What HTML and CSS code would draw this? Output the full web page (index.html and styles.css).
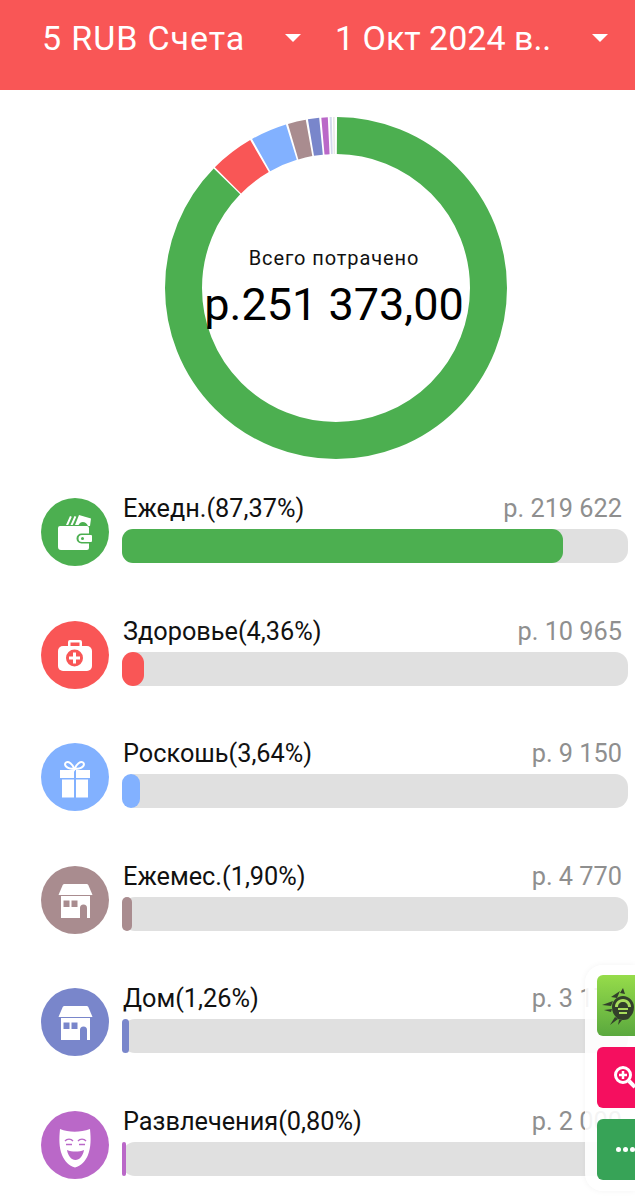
FILE: index.html
```html
<!DOCTYPE html>
<html lang="en">
<head>
  <meta charset="UTF-8" />
  <title>Расходы</title>
  <link rel="stylesheet" href="styles.css">
</head>
<body>
  <div class="header">
    <div class="select select-accounts"><span>5 RUB Счета</span><i class="caret"></i></div>
    <div class="select select-date"><span>1 Окт 2024 в..</span><i class="caret"></i></div>
  </div>

  <div class="chart">
    <svg class="donut" width="342" height="342" viewBox="0 0 342 342">
      <g fill="none" stroke-width="37" transform="rotate(-90 171 171)">
        <circle cx="171" cy="171" r="152.5" pathLength="100" stroke="#4caf50" stroke-dasharray="87.22 100" stroke-dashoffset="-0.1"/>
        <circle cx="171" cy="171" r="152.5" pathLength="100" stroke="#f95656" stroke-dasharray="4.16 100" stroke-dashoffset="-87.47"/>
        <circle cx="171" cy="171" r="152.5" pathLength="100" stroke="#82b1ff" stroke-dasharray="3.44 100" stroke-dashoffset="-91.83"/>
        <circle cx="171" cy="171" r="152.5" pathLength="100" stroke="#a98c8f" stroke-dasharray="1.7 100" stroke-dashoffset="-95.47"/>
        <circle cx="171" cy="171" r="152.5" pathLength="100" stroke="#7986cb" stroke-dasharray="1.06 100" stroke-dashoffset="-97.37"/>
        <circle cx="171" cy="171" r="152.5" pathLength="100" stroke="#ba68c8" stroke-dasharray="0.6 100" stroke-dashoffset="-98.63"/>
        <circle cx="171" cy="171" r="152.5" pathLength="100" stroke="#d5d9ee" stroke-dasharray="0.2 100" stroke-dashoffset="-99.4"/>
        <circle cx="171" cy="171" r="152.5" pathLength="100" stroke="#e6e6e6" stroke-dasharray="0.15 100" stroke-dashoffset="-99.72"/>
      </g>
    </svg>
    <div class="chart-center">
      <div class="chart-label">Всего потрачено</div>
      <div class="chart-total">р.251 373,00</div>
    </div>
  </div>

  <div class="list">
    <div class="row">
      <div class="icon" style="background:#4caf50">
        <svg width="68" height="68" viewBox="0 0 68 68" fill="#fff">
          <path d="M25 27l4-9 1.800.8-3.600 8.200zM29.500 27l4-9 1.800.8-3.600 8.200zM34 27l4-10 12 3.500-1 7.500h-2c-1.500-3.500-5-5-8-3l-1.500 2z"/>
          <path d="M19 28h27a2 2 0 0 1 2 2v5.500h-7.500a5 5 0 0 0 0 10H48V50a2 2 0 0 1-2 2H20a3 3 0 0 1-3-3V30a2 2 0 0 1 2-2z"/>
          <path fill-rule="evenodd" d="M41 37h9a1 1 0 0 1 1 1v5a1 1 0 0 1-1 1h-9a3.500 3.500 0 0 1 0-7zM41.500 39a1.500 1.500 0 1 0 0 3 1.500 1.500 0 0 0 0-3z"/>
        </svg>
      </div>
      <div class="info">
        <div class="info-top"><span class="name">Ежедн.(87,37%)</span><span class="amount">р. 219 622</span></div>
        <div class="track"><div class="fill" style="width:87.2%;background:#4caf50"></div></div>
      </div>
    </div>

    <div class="row">
      <div class="icon" style="background:#f95656">
        <svg width="68" height="68" viewBox="0 0 68 68" fill="#fff">
          <path d="M27 25v-4a2 2 0 0 1 2-2h10a2 2 0 0 1 2 2v4h-2.500v-3.500h-9V25z"/>
          <rect x="17" y="25" width="34" height="25" rx="5"/>
          <circle cx="33.500" cy="37" r="8.500" fill="#f95656"/>
          <path d="M32 31.500h3V35.500h4v3h-4v4h-3v-4h-4v-3h4z"/>
        </svg>
      </div>
      <div class="info">
        <div class="info-top"><span class="name">Здоровье(4,36%)</span><span class="amount">р. 10 965</span></div>
        <div class="track"><div class="fill" style="width:22px;background:#f95656"></div></div>
      </div>
    </div>

    <div class="row">
      <div class="icon" style="background:#82b1ff">
        <svg width="68" height="68" viewBox="0 0 68 68" fill="#fff">
          <path d="M33.500 26c-2-5-6-8-8.500-6.500-2.500 2 0 6.500 8.500 6.500 8.500 0 11-4.500 8.500-6.500-2.500-1.500-6.500 1.500-8.500 6.500z" fill="none" stroke="#fff" stroke-width="2"/>
          <rect x="19" y="27" width="14" height="8"/>
          <rect x="35" y="27" width="14" height="8"/>
          <rect x="21" y="36.500" width="12" height="18"/>
          <rect x="35" y="36.500" width="12" height="18"/>
        </svg>
      </div>
      <div class="info">
        <div class="info-top"><span class="name">Роскошь(3,64%)</span><span class="amount">р. 9 150</span></div>
        <div class="track"><div class="fill" style="width:18px;background:#82b1ff"></div></div>
      </div>
    </div>

    <div class="row">
      <div class="icon" style="background:#a98c8f">
        <svg width="68" height="68" viewBox="0 0 68 68" fill="#fff">
          <path d="M23.500 18h22c1 0 1.500.5 2 1.500L51.500 29h-34l4-9.500c.5-1 1-1.500 2-1.500z"/>
          <path fill-rule="evenodd" d="M20 30h29v22h-3V42a3.500 3.500 0 0 0-7 0v10H20zM22.500 34.500v6.500h6v-6.500zM30.500 34.500v6.500h6v-6.500z"/>
        </svg>
      </div>
      <div class="info">
        <div class="info-top"><span class="name">Ежемес.(1,90%)</span><span class="amount">р. 4 770</span></div>
        <div class="track"><div class="fill" style="width:10px;background:#a98c8f"></div></div>
      </div>
    </div>

    <div class="row">
      <div class="icon" style="background:#7986cb">
        <svg width="68" height="68" viewBox="0 0 68 68" fill="#fff">
          <path d="M23.500 18h22c1 0 1.500.5 2 1.500L51.500 29h-34l4-9.500c.5-1 1-1.500 2-1.500z"/>
          <path fill-rule="evenodd" d="M20 30h29v22h-3V42a3.500 3.500 0 0 0-7 0v10H20zM22.500 34.500v6.500h6v-6.500zM30.500 34.500v6.500h6v-6.500z"/>
        </svg>
      </div>
      <div class="info">
        <div class="info-top"><span class="name">Дом(1,26%)</span><span class="amount">р. 3 170</span></div>
        <div class="track"><div class="fill" style="width:7px;background:#7986cb"></div></div>
      </div>
    </div>

    <div class="row">
      <div class="icon" style="background:#ba68c8">
        <svg width="68" height="68" viewBox="0 0 68 68">
          <path d="M19 18c9 3.500 20 3.500 30 0 1 10 1 18-2 26-2.500 6-7 11-13 12.500C28 55 23.500 50 21 44c-3-8-3-16-2-26z" fill="#fff"/>
          <path d="M24 30c2-2.500 6-2.500 8 0M37 30c2-2.500 6-2.500 8 0M25 33.500h6M38 33.500h6" fill="none" stroke="#ba68c8" stroke-width="1.300"/>
          <path d="M26 39c5 2 12 2 17 0-1 6-4.500 10-8.500 10s-7.500-4-8.500-10z" fill="#ba68c8"/>
        </svg>
      </div>
      <div class="info">
        <div class="info-top"><span class="name">Развлечения(0,80%)</span><span class="amount">р. 2 000</span></div>
        <div class="track"><div class="fill" style="width:4px;background:#ba68c8"></div></div>
      </div>
    </div>
  </div>

  <!-- floating side panel -->
  <div class="side-panel">
    <div class="side-btn side-web">
      <svg width="38" height="61" viewBox="0 0 38 61" fill="#33402b">
        <path d="M26 21c6 0 11 5 11 11 0 5-2 8-4 10-1 2-3 3-7 3s-6-1-7-3c-2-2-4-5-4-10 0-6 5-11 11-11z"/>
        <path d="M26 24c5 0 8 4 8 8h-3c0-3-2-5-5-5s-5 2-5 5h-3c0-4 3-8 8-8z" fill="#a8dc5c"/>
        <path d="M21 33h10v2H21zM22 37h8v2h-8z" fill="#a8dc5c"/>
        <path d="M14 22l9-6-3 7zM5 30l11-4-2 5zM7 35l8-1-1 3zM18 42l-5 8 8-6zM22 45l-1 5 4-5zM26 13l2 6-5-1z"/>
      </svg>
    </div>
    <div class="side-btn side-zoom">
      <svg width="38" height="61" viewBox="0 0 38 61" fill="none" stroke="#fff">
        <circle cx="26" cy="28" r="7.500" stroke-width="3"/>
        <path d="M32 34l6 6" stroke-width="4"/>
        <path d="M22 28h8M26 24v8" stroke-width="2.500"/>
      </svg>
    </div>
    <div class="side-btn side-more">
      <i class="dot"></i><i class="dot"></i><i class="dot"></i>
    </div>
  </div>
</body>
</html>
```

FILE: styles.css
```css
* {
  margin: 0;
  padding: 0;
  box-sizing: border-box;
}

html, body {
  height: 1200px;
  overflow: hidden;
}

body {
  position: relative;
  background: #fff;
  font-family: Roboto, sans-serif;
  color: #111;
}

.header {
  display: flex;
  height: 90px;
  padding: 0 27px 15px 42px;
  align-items: center;
  background: #f95656;
  color: #fff;
  font-size: 34px;
}

.select {
  display: flex;
  align-items: center;
  justify-content: space-between;
}

.select-accounts {
  width: 293px;
  padding-right: 34px;
  letter-spacing: 0.9px;
}

.select-date {
  flex: 1;
}

.caret {
  width: 0;
  height: 0;
  border-left: 8px solid transparent;
  border-right: 8px solid transparent;
  border-top: 8px solid #fff;
}

.chart {
  display: grid;
  width: 342px;
  height: 342px;
  margin: 27px 0 0 165px;
}

.donut,
.chart-center {
  grid-area: 1 / 1;
}

.chart-center {
  align-self: center;
  text-align: center;
  padding-right: 4px;
}

.chart-label {
  font-size: 20px;
  letter-spacing: 0.9px;
  margin-bottom: 8px;
}

.chart-total {
  font-size: 45px;
  color: #000;
  white-space: nowrap;
}

.list {
  margin-top: 39px;
  padding-left: 41px;
  padding-right: 7px;
}

.row {
  display: flex;
  height: 122.6px;
  gap: 14px;
}

.icon {
  width: 68px;
  height: 68px;
  border-radius: 50%;
  flex-shrink: 0;
}

.icon svg {
  display: block;
}

.info {
  flex: 1;
}

.info-top {
  display: flex;
  justify-content: space-between;
  height: 31px;
  line-height: 22px;
  padding-right: 6px;
}

.name {
  font-size: 25.3px;
}

.amount {
  font-size: 25.3px;
  color: #8f8f8f;
}

.track {
  height: 34px;
  margin-left: -1px;
  border-radius: 13px;
  background: #e0e0e0;
}

.fill {
  height: 100%;
  border-radius: 11px;
}

.side-panel {
  position: absolute;
  top: 965px;
  right: 0;
  width: 50px;
  height: 226px;
  display: flex;
  flex-direction: column;
  gap: 11px;
  padding: 10px 0 0 12px;
  border-radius: 18px 0 0 18px;
  background: rgba(255, 255, 255, 0.9);
  box-shadow: 0 0 6px rgba(0, 0, 0, 0.05);
}

.side-btn {
  display: flex;
  align-items: center;
  gap: 2px;
  width: 60px;
  height: 61px;
  border-radius: 6px;
}

.side-web {
  background: linear-gradient(#96dc4a, #5aa83e);
}

.side-zoom {
  background: #f50f5f;
}

.side-more {
  background: #37a357;
  padding-left: 19px;
}

.dot {
  width: 5px;
  height: 5px;
  border-radius: 50%;
  background: #fff;
  flex-shrink: 0;
}
```
